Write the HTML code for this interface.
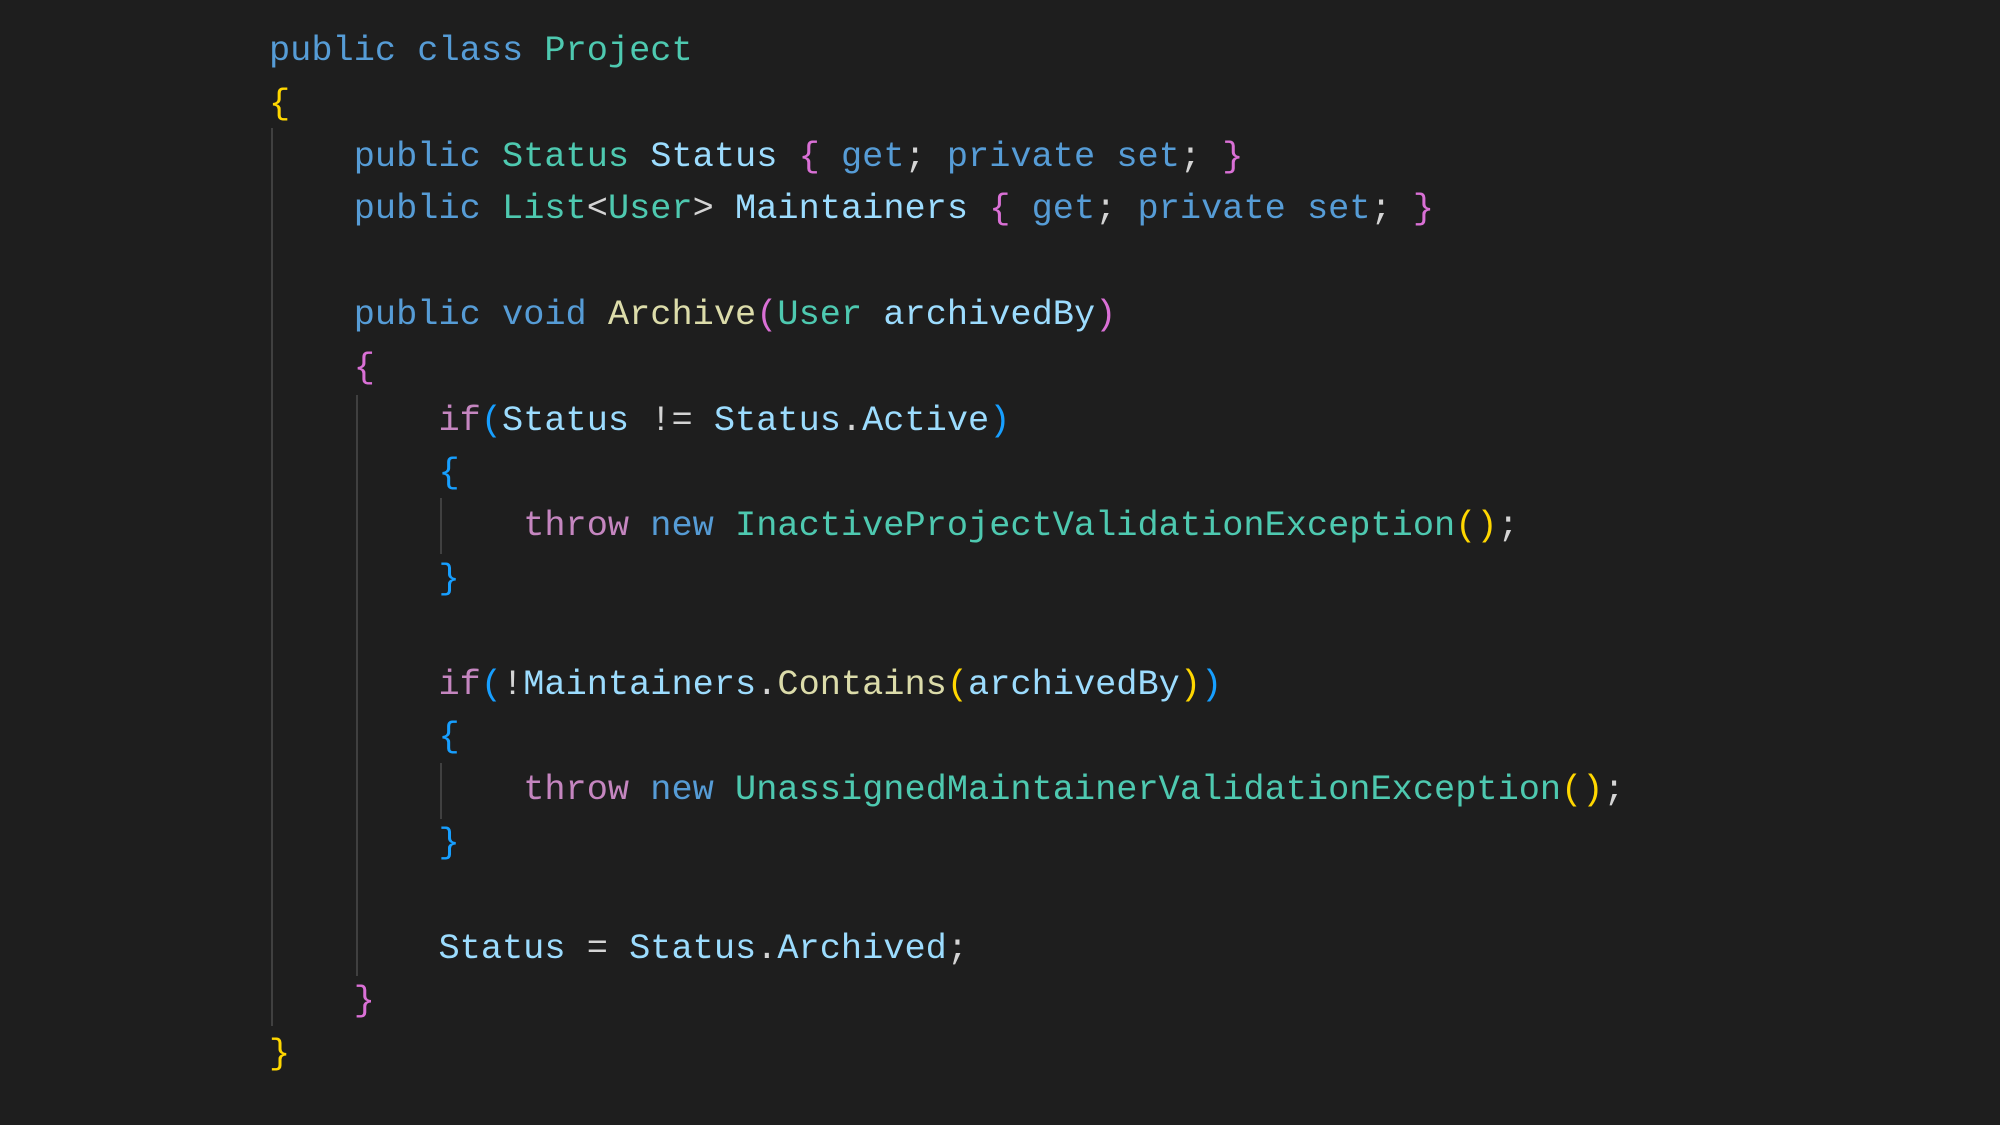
<!DOCTYPE html>
<html><head><meta charset="utf-8"><style>
html,body{margin:0;padding:0;background:#1e1e1e;width:2000px;height:1125px;overflow:hidden}
pre{position:absolute;left:269px;top:25px;margin:0;font-family:"Liberation Mono",monospace;font-size:35.3px;line-height:52.8px;color:#d4d4d4;white-space:pre}
.k{color:#569cd6}.t{color:#4ec9b0}.p{color:#9cdcfe}.m{color:#dcdcaa}.c{color:#c586c0}
.y{color:#ffd700}.pk{color:#da70d6}.b{color:#179fff}
.g{position:absolute;width:2px;background:#404040}
</style></head><body>
<div class="g" style="left:271px;top:128px;height:898px"></div>
<div class="g" style="left:356px;top:395px;height:581px"></div>
<div class="g" style="left:440px;top:498px;height:56px"></div>
<div class="g" style="left:440px;top:763px;height:56px"></div>
<pre><span class="k">public</span> <span class="k">class</span> <span class="t">Project</span>
<span class="y">{</span>
    <span class="k">public</span> <span class="t">Status</span> <span class="p">Status</span> <span class="pk">{</span> <span class="k">get</span>; <span class="k">private</span> <span class="k">set</span>; <span class="pk">}</span>
    <span class="k">public</span> <span class="t">List</span>&lt;<span class="t">User</span>&gt; <span class="p">Maintainers</span> <span class="pk">{</span> <span class="k">get</span>; <span class="k">private</span> <span class="k">set</span>; <span class="pk">}</span>

    <span class="k">public</span> <span class="k">void</span> <span class="m">Archive</span><span class="pk">(</span><span class="t">User</span> <span class="p">archivedBy</span><span class="pk">)</span>
    <span class="pk">{</span>
        <span class="c">if</span><span class="b">(</span><span class="p">Status</span> != <span class="p">Status</span>.<span class="p">Active</span><span class="b">)</span>
        <span class="b">{</span>
            <span class="c">throw</span> <span class="k">new</span> <span class="t">InactiveProjectValidationException</span><span class="y">()</span>;
        <span class="b">}</span>

        <span class="c">if</span><span class="b">(</span>!<span class="p">Maintainers</span>.<span class="m">Contains</span><span class="y">(</span><span class="p">archivedBy</span><span class="y">)</span><span class="b">)</span>
        <span class="b">{</span>
            <span class="c">throw</span> <span class="k">new</span> <span class="t">UnassignedMaintainerValidationException</span><span class="y">()</span>;
        <span class="b">}</span>

        <span class="p">Status</span> = <span class="p">Status</span>.<span class="p">Archived</span>;
    <span class="pk">}</span>
<span class="y">}</span></pre>
</body></html>
